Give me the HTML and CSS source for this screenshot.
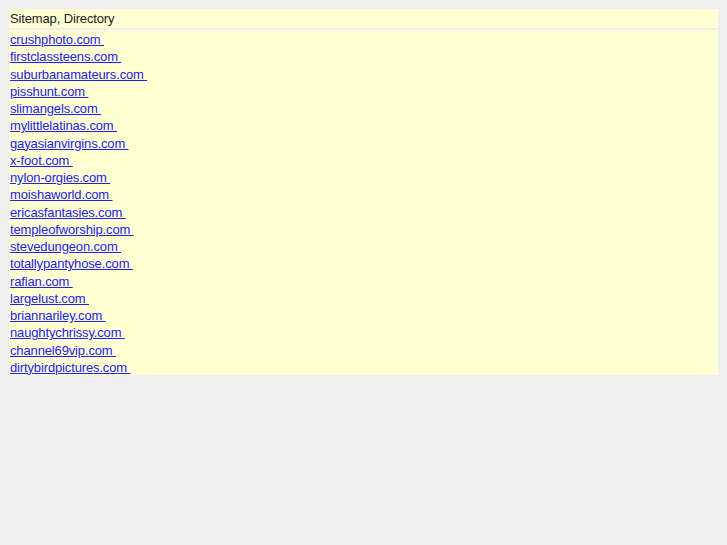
FILE: index.html
```html
<!DOCTYPE html>
<html>
<head>
<meta charset="utf-8">
<title>Sitemap, Directory</title>
<link rel="stylesheet" href="styles.css">
</head>
<body>
<div class="table">
  <div class="head">Sitemap, Directory</div>
  <div class="list">
    <a href="#">crushphoto.com </a>
    <a href="#">firstclassteens.com </a>
    <a href="#">suburbanamateurs.com </a>
    <a href="#">pisshunt.com </a>
    <a href="#">slimangels.com </a>
    <a href="#">mylittlelatinas.com </a>
    <a href="#">gayasianvirgins.com </a>
    <a href="#">x-foot.com </a>
    <a href="#">nylon-orgies.com </a>
    <a href="#">moishaworld.com </a>
    <a href="#">ericasfantasies.com </a>
    <a href="#">templeofworship.com </a>
    <a href="#">stevedungeon.com </a>
    <a href="#">totallypantyhose.com </a>
    <a href="#">rafian.com </a>
    <a href="#">largelust.com </a>
    <a href="#">briannariley.com </a>
    <a href="#">naughtychrissy.com </a>
    <a href="#">channel69vip.com </a>
    <a href="#">dirtybirdpictures.com </a>
  </div>
</div>
</body>
</html>
```
FILE: styles.css
```css
html, body {
  background: #eeeeee;
}
body {
  margin: 8px;
  font-family: "Liberation Sans", Arial, sans-serif;
  font-size: 13px;
  letter-spacing: -0.14px;
  color: #222222;
}
.table {
  display: flex;
  flex-direction: column;
  gap: 2px;
  padding: 1px;
}
.head {
  background: #ffffd4;
  height: 19px;
  line-height: 19px;
  padding: 0 1px;
}
.list {
  background: #ffffd4;
  display: flex;
  flex-direction: column;
  align-items: flex-start;
  padding: 0 1px;
}
.list a {
  color: #2222ee;
  text-decoration: underline;
  padding-top: 2px;
  line-height: 15.26px;
  height: 15.26px;
  white-space: pre;
}
```
